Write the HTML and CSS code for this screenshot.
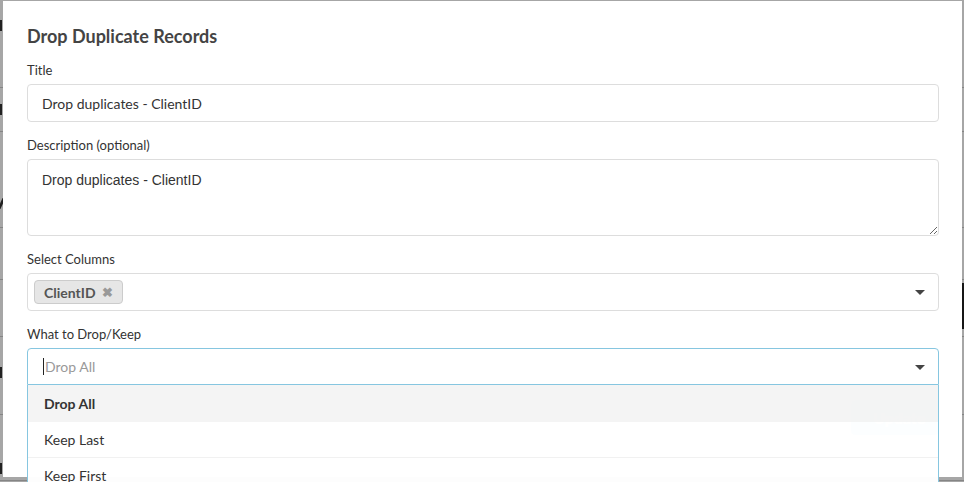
FILE: index.html
```html
<!DOCTYPE html>
<html lang="en">
<head>
    <meta charset="UTF-8">
    <meta name="viewport" content="width=device-width, initial-scale=1.0">
    <title>Drop Duplicate Records</title>
    <link rel="stylesheet" href="styles.css">
</head>
<body>
    <div class="page">
        <div class="page-row row-a"><span class="mark"></span></div>
        <div class="page-row row-b"><span class="mark"></span></div>
        <div class="page-row row-c"><span class="mark slant"></span></div>
        <div class="page-row row-d"></div>
        <div class="page-row row-e"></div>
        <div class="page-row row-f"><span class="mark"></span></div>
        <div class="page-row row-g"><span class="mark"></span></div>
        <div class="page-side"></div>
    </div>

    <div class="overlay"></div>

    <div class="modal">
        <h4 class="modal-title">Drop Duplicate Records</h4>

        <div class="form-group">
            <label for="title">Title</label>
            <input type="text" id="title" class="form-control" value="Drop duplicates - ClientID">
        </div>

        <div class="form-group">
            <label for="description">Description (optional)</label>
            <textarea id="description" class="form-control textarea">Drop duplicates - ClientID</textarea>
        </div>

        <div class="form-group">
            <label>Select Columns</label>
            <div class="select-box">
                <span class="tag">ClientID <span class="tag-remove">&#10006;</span></span>
                <span class="caret"></span>
            </div>
        </div>

        <div class="form-group dropdown">
            <label>What to Drop/Keep</label>
            <div class="select-box open">
                <span class="cursor"></span>
                <span class="placeholder">Drop All</span>
                <span class="caret"></span>
            </div>
            <ul class="menu">
                <li class="option active">Drop All</li>
                <li class="option">Keep Last</li>
                <li class="option">Keep First</li>
            </ul>
        </div>

        <div class="modal-footer">
            <button class="btn btn-close">Close</button>
            <button class="btn btn-primary">Update</button>
        </div>
    </div>
</body>
</html>
```

FILE: styles.css
```css
* {
    box-sizing: border-box;
    margin: 0;
    padding: 0;
}

body {
    font-family: 'Lato', 'Open Sans', sans-serif;
    color: #333;
    background: #fff;
    width: 964px;
    height: 482px;
    overflow: hidden;
    position: relative;
}

/* page behind the modal */
.page-row {
    border-bottom: 1px solid #ccc;
    overflow: hidden;
}

.mark {
    display: block;
    width: 2px;
    height: 11px;
    background: #333;
}

.mark.slant {
    width: 3px;
    transform: skewX(-25deg);
}

.row-a { height: 88px; padding-top: 20px; }
.row-b { height: 44px; padding-top: 16px; }
.row-c { height: 96px; padding-top: 66px; }
.row-d { height: 52px; }
.row-e { height: 57px; }
.row-f { height: 78px; padding-top: 30px; }
.row-g { height: 66px; padding-top: 48px; }

.page-side {
    position: absolute;
    right: 0;
    top: 283px;
    width: 2px;
    height: 46px;
    background: #222;
}

.overlay {
    position: absolute;
    inset: 0;
    background: rgba(0, 0, 0, 0.35);
}

/* modal */
.modal {
    position: absolute;
    left: 3px;
    top: 1px;
    width: 959px;
    height: 476px;
    background: #fff;
    padding: 23px 23px 0 24px;
}

.modal-title {
    font-size: 18px;
    font-weight: bold;
    color: #444;
    line-height: 24px;
    margin-bottom: 14px;
}

.form-group {
    margin-bottom: 15px;
}

label {
    display: block;
    font-size: 13px;
    line-height: 17px;
    margin-bottom: 5px;
    color: #333;
}

.form-control {
    display: block;
    width: 100%;
    height: 38px;
    padding: 0 14px;
    border: 1px solid #ddd;
    border-radius: 4px;
    font-family: 'Lato', sans-serif;
    font-size: 14px;
    color: #333;
    outline: none;
}

.textarea {
    height: 77px;
    padding: 12px 14px;
    font-family: 'Liberation Sans', sans-serif;
    resize: vertical;
}

.select-box {
    position: relative;
    display: flex;
    align-items: center;
    height: 38px;
    padding: 0 6px;
    border: 1px solid #ddd;
    border-radius: 4px;
    font-size: 14px;
}

.tag {
    display: inline-flex;
    align-items: center;
    gap: 6px;
    height: 24px;
    padding: 0 9px;
    background: #e6e6e6;
    border: 1px solid #ccc;
    border-radius: 4px;
    font-weight: bold;
    color: #555;
}

.tag-remove {
    font-size: 13px;
    color: #999;
}

.caret {
    position: absolute;
    right: 13px;
    top: 16px;
    border-left: 5px solid transparent;
    border-right: 5px solid transparent;
    border-top: 5px solid #444;
}

.select-box.open {
    height: 37px;
    border-color: #86c6e0;
    border-radius: 4px 4px 0 0;
    padding-left: 15px;
}

.cursor {
    width: 1px;
    height: 17px;
    background: #222;
    margin-right: 1px;
}

.placeholder {
    color: #999;
}

.dropdown {
    position: relative;
    z-index: 2;
}

.menu {
    position: absolute;
    left: 0;
    right: 0;
    top: 59px;
    list-style: none;
    border: 1px solid #86c6e0;
    border-top: none;
    background: rgba(255, 255, 255, 0.98);
}

.option {
    height: 36px;
    line-height: 36px;
    padding: 0 16px;
    font-size: 14px;
    color: #333;
    border-bottom: 1px solid rgba(240, 240, 240, 0.9);
}

.option.active {
    height: 37px;
    line-height: 37px;
    font-weight: bold;
    background: rgba(240, 240, 240, 0.7);
    border-bottom: none;
}

.modal-footer {
    display: flex;
    justify-content: flex-end;
    align-items: center;
    gap: 20px;
}

.btn {
    font-family: 'Lato', sans-serif;
    font-size: 16px;
    font-weight: bold;
    height: 35px;
    border: none;
    border-radius: 4px;
    padding: 0 22px;
}

.btn-close {
    background: none;
    color: #fff;
}

.btn-primary {
    width: 88px;
    background: #7aaee6;
    color: #fff;
}
```
